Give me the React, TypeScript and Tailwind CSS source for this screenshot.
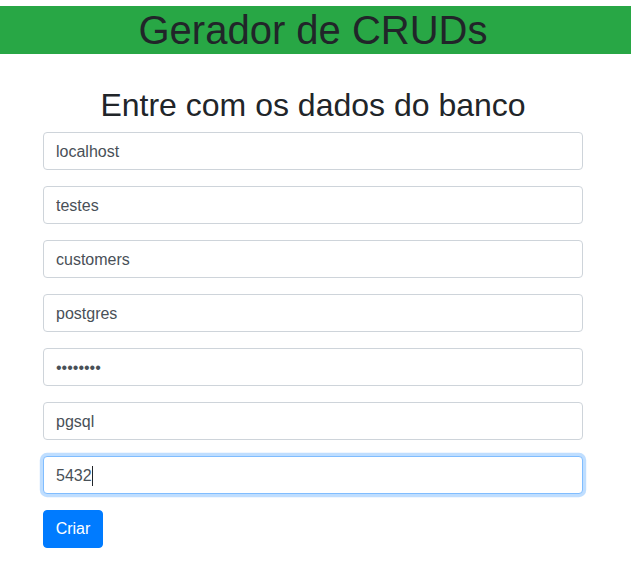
import React from "react";

const inputCls =
  "block w-full h-[38px] px-[12px] pt-[7px] pb-[5px] text-[16px] leading-[24px] text-[#495057] bg-white border border-[#ced4da] rounded-[4px] outline-none";

export default function App() {
  const values = ["localhost", "testes", "customers", "postgres"];
  return (
    <div className="min-h-[570px] bg-white text-[#212529] font-['Liberation_Sans',Arial,sans-serif]">
      <div className="pt-[6px]">
        <div className="bg-[#28a745]">
          <div className="ml-[43px] w-[540px] text-center text-[40px] leading-[48px] font-normal">
            Gerador de CRUDs
          </div>
        </div>
      </div>
      <div className="ml-[43px] w-[540px]">
        <h2 className="mt-[32px] mb-[8px] text-center text-[32px] leading-[38.4px] font-normal">
          Entre com os dados do banco
        </h2>
        <div className="flex flex-col gap-[16px]">
          {values.map((v) => (
            <input key={v} className={inputCls} defaultValue={v} readOnly />
          ))}
          <input className={inputCls} type="password" defaultValue="12345678" readOnly />
          <input className={inputCls} defaultValue="pgsql" readOnly />
          <div className="flex items-center h-[38px] px-[12px] pt-[1px] text-[16px] leading-[24px] text-[#495057] bg-white border border-[#80bdff] rounded-[4px] shadow-[0_0_0_3.2px_rgba(0,123,255,0.25)]">
            <span>5432</span>
            <span className="inline-block w-px h-[20px] bg-[#212529]" />
          </div>
          <div>
            <button className="w-[60px] h-[38px] py-[6px] text-center text-[16px] leading-[24px] text-white bg-[#007bff] border border-[#007bff] rounded-[4px]">
              Criar
            </button>
          </div>
        </div>
      </div>
    </div>
  );
}
